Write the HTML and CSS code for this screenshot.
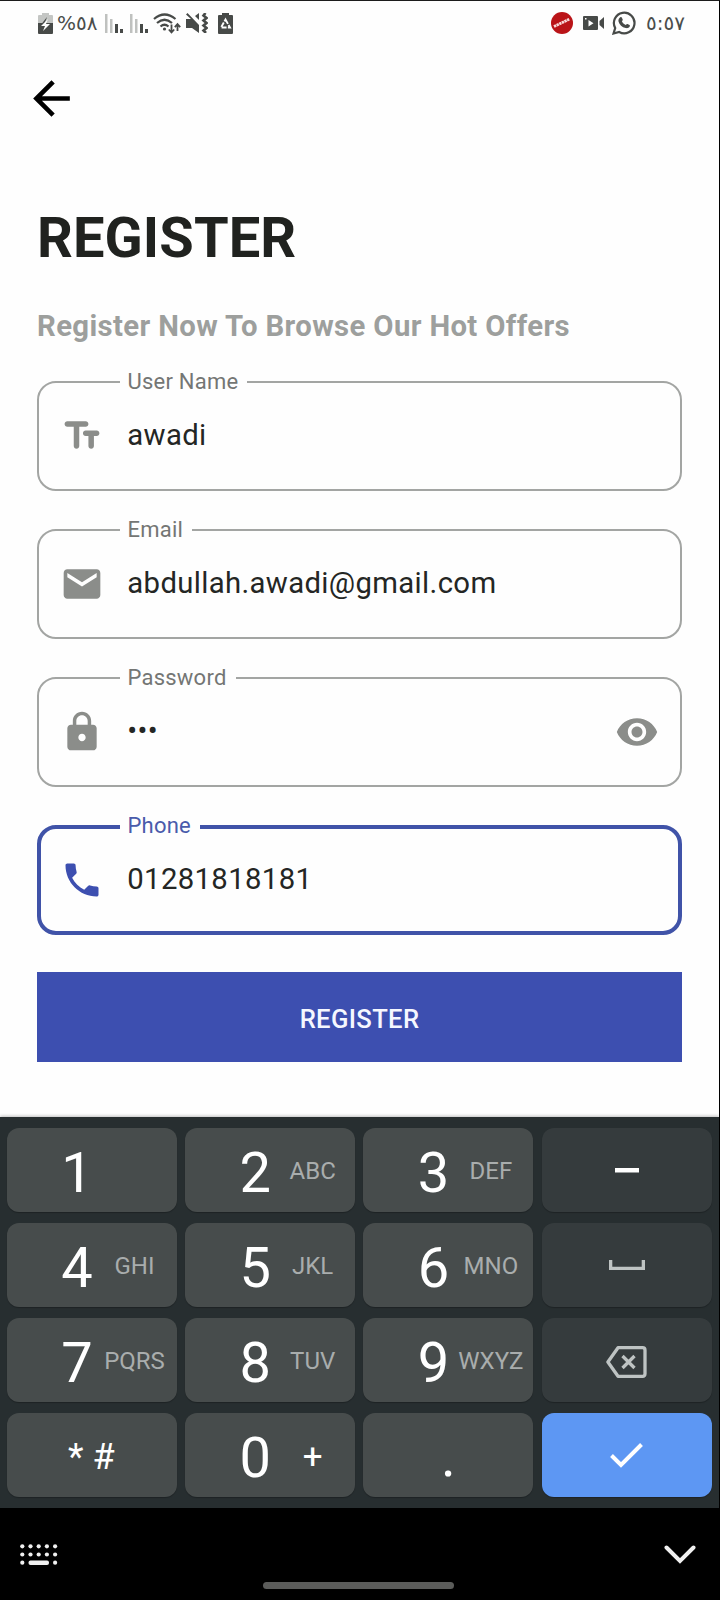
FILE: index.html
```html
<!DOCTYPE html>
<html lang="en">
<head>
<meta charset="utf-8">
<title>Register</title>
<link rel="stylesheet" href="styles.css">
</head>
<body>
<div class="screen">
  <header class="status">
    <div class="status-left">
      <svg class="battery" width="15" height="21" viewBox="0 0 15 21"><path fill="#c4c6c4" d="M4 0h7v2h3q1 0 1 1v8H0V3q0-1 1-1h3z"/><path fill="#474a48" d="M0 10h15v10q0 1-1 1H1q-1 0-1-1z"/><path fill="#474a48" d="M9 4 3.500 11h3z"/><path fill="#fff" d="M10 6 3 13h4l-2 5 7-7H8z"/></svg>
      <span class="percent">%٥٨</span>
      <svg class="signal" width="18" height="20" viewBox="0 0 18 20"><path fill="#bfc1bf" d="M0 1h2.500v19H0zM5 6h2.500v14H5z"/><path fill="#474a48" d="M10 11h3v9h-3zM15 16h3v4h-3z"/></svg>
      <svg class="signal two" width="18" height="20" viewBox="0 0 18 20"><path fill="#bfc1bf" d="M0 1h2.500v19H0zM5 6h2.500v14H5z"/><path fill="#474a48" d="M10 11h3v9h-3zM15 16h3v4h-3z"/></svg>
      <svg class="wifi" width="28" height="21" viewBox="0 0 28 21" fill="none" stroke="#474a48"><path stroke-width="2.200" d="M1 6q10.500-9 21.500 0M4 10q7.500-6.500 15 0M7.500 13.500q4-3.500 8 0"/><circle cx="11.500" cy="16" r="1.600" fill="#474a48" stroke="none"/><path stroke-width="1.800" d="M18.500 11.500v7M15.800 16.500l2.700 3 2.700-3M24.500 18v-6M21.800 14.200l2.700-3 2.700 3"/></svg>
      <svg class="mute" width="22" height="20" viewBox="0 0 22 20"><path fill="#474a48" d="M0 6h5L0 1.500 1.500 0 13 12v8l-7-5H0zM9 3l4-3v7z"/><path fill="none" stroke="#474a48" stroke-width="2.600" d="M19.500 0l-2 2.500 3 2.500-3 2.500 3 2.500-3 2.500 3 2.500-3 2.500 2.500 2.500"/></svg>
      <svg class="saver" width="15" height="21" viewBox="0 0 15 21"><path fill="#474a48" d="M4 0h7v2h3q1 0 1 1v17q0 1-1 1H1q-1 0-1-1V3q0-1 1-1h3z"/><path fill="none" stroke="#fff" stroke-width="1.900" stroke-dasharray="5 1.300" d="M7.500 6.500 12 14.500H3z"/></svg>
    </div>
    <div class="status-right">
      <svg width="22" height="22" viewBox="0 0 22 22"><circle cx="11" cy="11" r="11" fill="#ba1418"/><path fill="none" stroke="#f6dada" stroke-width="2.800" stroke-dasharray="2.400 .5" d="M3 14.500 18.500 7"/></svg>
      <svg class="video" width="21" height="14" viewBox="0 0 21 14"><path fill="#474a48" d="M1 0h13q1 0 1 1v12q0 1-1 1H1q-1 0-1-1V1q0-1 1-1zM16.500 5 21 1v12l-4.500-4z"/><path fill="#fff" d="M5.500 4v6.500l5-3.200zM2 2h1.500v1.500H2z"/></svg>
      <svg class="whatsapp" width="24" height="24" viewBox="0 0 24 24"><path fill="none" stroke="#474a48" stroke-width="2.200" d="M1.500 22.500 3.200 17A10.300 10.300 0 1 1 7.200 21z"/><path fill="#474a48" d="M8.300 6.200c.6-.4 1.200-.2 1.500.3l.9 2c.2.500-.1 1-.8 1.700.8 1.700 2 2.900 3.900 3.800.8-1 1.200-1.300 1.700-1l2 1c.5.300.5.900.2 1.500-.7 1.500-2.400 2-4 1.600-3.700-1-6.300-3.600-7.200-6.700-.4-1.700.5-3.400 1.800-4.200z"/></svg>
      <span class="clock">٥:٥٧</span>
    </div>
  </header>

  <main class="content">
    <svg class="back" width="55" height="55" viewBox="0 0 24 24"><path d="M20 11H7.830l5.590-5.590L12 4l-8 8 8 8 1.410-1.410L7.830 13H20z"/></svg>
    <h1 class="title"><span>REGISTER</span></h1>
    <p class="subtitle">Register Now To Browse Our Hot Offers</p>

    <div class="fields">
      <div class="field">
        <label class="label">User Name</label>
        <svg class="icon" viewBox="0 0 24 24"><path d="M2.500 5.500C2.500 6.330 3.170 7 4 7h3.500v10.500c0 .83.67 1.500 1.500 1.500s1.500-.67 1.500-1.500V7H14c.83 0 1.500-.67 1.500-1.500S14.830 4 14 4H4c-.83 0-1.500.67-1.500 1.500zM20 9h-6c-.83 0-1.500.67-1.500 1.500S13.170 12 14 12h1.500v5.500c0 .83.67 1.500 1.500 1.500s1.500-.67 1.500-1.500V12H20c.83 0 1.500-.67 1.500-1.500S20.830 9 20 9z"/></svg>
        <span class="value">awadi</span>
      </div>
      <div class="field">
        <label class="label">Email</label>
        <svg class="icon" viewBox="0 0 24 24"><path d="M20 4H4c-1.100 0-1.990.9-1.990 2L2 18c0 1.100.9 2 2 2h16c1.100 0 2-.9 2-2V6c0-1.100-.9-2-2-2zm0 4.300l-8 5-8-5V6l8 5 8-5v2.300z"/></svg>
        <span class="value">abdullah.awadi@gmail.com</span>
      </div>
      <div class="field">
        <label class="label">Password</label>
        <svg class="icon" viewBox="0 0 24 24"><path d="M18 8h-1V6c0-2.760-2.240-5-5-5S7 3.240 7 6v2H6c-1.100 0-2 .9-2 2v10c0 1.100.9 2 2 2h12c1.100 0 2-.9 2-2V10c0-1.100-.9-2-2-2zm-6 9c-1.100 0-2-.9-2-2s.9-2 2-2 2 .9 2 2-.9 2-2 2zm3.100-9H8.900V6c0-1.710 1.390-3.100 3.100-3.100 1.710 0 3.100 1.390 3.100 3.100v2z"/></svg>
        <span class="value">•••</span>
        <svg class="icon eye" viewBox="0 0 24 24"><path d="M12 4.500C7 4.500 2.730 7.610 1 12c1.730 4.390 6 7.500 11 7.500s9.270-3.110 11-7.500c-1.730-4.390-6-7.500-11-7.500zM12 17c-2.760 0-5-2.240-5-5s2.240-5 5-5 5 2.240 5 5-2.240 5-5 5zm0-8c-1.660 0-3 1.340-3 3s1.340 3 3 3 3-1.340 3-3-1.340-3-3-3z"/></svg>
      </div>
      <div class="field focused">
        <label class="label">Phone</label>
        <svg class="icon" viewBox="0 0 24 24"><path d="M6.620 10.790c1.440 2.830 3.760 5.140 6.590 6.590l2.200-2.200c.27-.27.67-.36 1.020-.24 1.120.37 2.330.57 3.570.57.55 0 1 .45 1 1V20c0 .55-.45 1-1 1-9.390 0-17-7.610-17-17 0-.55.45-1 1-1h3.500c.55 0 1 .45 1 1 0 1.250.2 2.450.57 3.570.11.35.03.74-.25 1.020l-2.200 2.200z"/></svg>
        <span class="value">01281818181</span>
      </div>
    </div>
    <button class="submit">REGISTER</button>
  </main>

  <section class="keyboard">
    <div class="key"><b>1</b></div>
    <div class="key"><b>2</b><i>ABC</i></div>
    <div class="key"><b>3</b><i>DEF</i></div>
    <div class="key fn"><svg width="24" height="6" viewBox="0 0 24 6"><path fill="#fff" d="M0 1h24v4.500H0z"/></svg></div>
    <div class="key"><b>4</b><i>GHI</i></div>
    <div class="key"><b>5</b><i>JKL</i></div>
    <div class="key"><b>6</b><i>MNO</i></div>
    <div class="key fn"><svg width="36" height="10" viewBox="0 0 36 10"><path fill="none" stroke="#bec3c3" stroke-width="3.300" d="M1.650 0v8.300h32.700V0"/></svg></div>
    <div class="key"><b>7</b><i>PQRS</i></div>
    <div class="key"><b>8</b><i>TUV</i></div>
    <div class="key"><b>9</b><i>WXYZ</i></div>
    <div class="key fn del"><svg width="41" height="32" viewBox="0 0 41 32" fill="none" stroke="#bec3c3" stroke-width="3.300"><path stroke-linejoin="round" d="M12 1.700h24.500q2.500 0 2.500 2.500v23.600q0 2.500-2.500 2.500H12L1.900 16z"/><path d="M16.500 10 28.500 22M28.500 10 16.500 22"/></svg></div>
    <div class="key sym"><span>*</span><span>#</span></div>
    <div class="key"><b>0</b><i class="plus">+</i></div>
    <div class="key fn dot"><span class="period">.</span></div>
    <div class="key fn ok"><svg width="33" height="26" viewBox="0 0 33 26"><path fill="none" stroke="#fff" stroke-width="4" d="M1.500 13.500 11 23 31.500 2.500"/></svg></div>
  </section>

  <nav class="navbar">
    <svg class="kb-icon" width="38" height="22" viewBox="0 0 38 22" fill="#f0f0f0"><g><circle cx="2.300" cy="2.300" r="2.100"/><circle cx="10.500" cy="2.300" r="2.100"/><circle cx="18.700" cy="2.300" r="2.100"/><circle cx="26.900" cy="2.300" r="2.100"/><circle cx="35.100" cy="2.300" r="2.100"/><circle cx="2.300" cy="10.500" r="2.100"/><circle cx="10.500" cy="10.500" r="2.100"/><circle cx="18.700" cy="10.500" r="2.100"/><circle cx="26.900" cy="10.500" r="2.100"/><circle cx="35.100" cy="10.500" r="2.100"/><circle cx="2.300" cy="18.700" r="2.100"/><circle cx="35.100" cy="18.700" r="2.100"/></g><rect x="8.500" y="16.500" width="20.500" height="4.500" rx="2"/></svg>
    <div class="handle"></div>
    <svg class="chevron" width="32" height="19" viewBox="0 0 32 19"><path fill="none" stroke="#f0f0f0" stroke-width="4" stroke-linecap="round" d="M2.500 2.500 16 16 29.500 2.500"/></svg>
  </nav>
</div>
</body>
</html>
```

FILE: styles.css
```css
* { box-sizing: border-box; }
body {
  margin: 0;
  background: #000;
  font-family: Roboto, "Liberation Sans", sans-serif;
}
.screen {
  width: 720px;
  height: 1600px;
  overflow: hidden;
  display: flex;
  flex-direction: column;
  background: #fefefe;
  border-top: 1px solid #1c1c1c;
  border-right: 1px solid #000;
}
.status {
  height: 44px;
  padding: 0 37px 0 38px;
  display: flex;
  justify-content: space-between;
  align-items: center;
  color: #4a4d4b;
}
.status-left, .status-right { display: flex; align-items: center; }
.percent, .clock {
  font-family: "DejaVu Sans", sans-serif;
  font-size: 20px;
  line-height: 24px;
  direction: ltr;
  unicode-bidi: bidi-override;
}
.percent { width: 40px; margin: 0 8px 0 4px; letter-spacing: -2px; white-space: nowrap; }
.two { margin-left: 7px; }
.wifi { margin-left: 5px; }
.mute { margin-left: 5px; }
.saver { margin-left: 10px; }
.video { margin-left: 10px; }
.whatsapp { margin-left: 8px; }
.clock { width: 36px; margin-left: 10px; letter-spacing: -1.500px; white-space: nowrap; }

.content {
  height: 1072px;
  padding: 0 37px;
  display: flex;
  flex-direction: column;
}
.back { margin: 26px 0 0 -13px; flex: none; }
.title {
  margin: 79px 0 0;
  font-size: 56px;
  line-height: 66px;
  font-weight: 700;
  letter-spacing: .1px;
  color: #20221f;
}
.subtitle {
  margin: 37px 0 0;
  font-size: 29.300px;
  line-height: 36px;
  font-weight: 700;
  letter-spacing: .370px;
  color: #9d9f9d;
  white-space: nowrap;
}
.fields {
  margin-top: 37px;
  display: flex;
  flex-direction: column;
  gap: 37.700px;
}
.field {
  position: relative;
  height: 110.300px;
  border: 2px solid #a3a5a3;
  border-radius: 19px;
  padding: 0 21px;
  display: flex;
  align-items: center;
}
.label {
  position: absolute;
  left: 81px;
  top: -15px;
  padding: 0 9px 0 7.500px;
  font-size: 22px;
  line-height: 27px;
  letter-spacing: .230px;
  color: #747674;
  background: #fefefe;
}
.icon { width: 44px; height: 44px; fill: #8b8d8a; flex: none; }
.value {
  margin-left: 23.300px;
  font-size: 29.300px;
  line-height: 36px;
  letter-spacing: .350px;
  color: #242624;
  position: relative;
  top: -1px;
}
.eye { margin-left: auto; }
.focused { border: 4px solid #4053a8; padding: 0 19px; }
.focused .label { left: 79px; top: -17px; color: #4a5bab; }
.focused .icon { fill: #3d4fb0; }
.submit {
  margin: 37px 0 0;
  padding: 3px 0 0;
  height: 90px;
  flex: none;
  border: 0;
  background: #3d4fb0;
  color: #f5f7ff;
  font: 500 25.600px/30px Roboto, sans-serif;
  letter-spacing: .350px;
}

.keyboard {
  height: 391px;
  padding: 11px 7px 10px;
  display: grid;
  grid-template-columns: repeat(4, 170px);
  grid-template-rows: repeat(4, 84px);
  gap: 11px 8.200px;
  background: #272e30;
  box-shadow: 0 -1px 3px rgba(0, 0, 0, .25);
}
.key {
  display: grid;
  grid-template-columns: 28px 75px;
  column-gap: 6px;
  padding-left: 56px;
  align-items: center;
  justify-items: center;
  background: #474c4c;
  border-radius: 12px;
  box-shadow: 0 1px 1px rgba(0, 0, 0, .25);
  color: #fff;
}
.key b { font-size: 56px; line-height: 60px; font-weight: 400; margin-top: 5px; }
.key i { font-size: 24px; line-height: 28px; font-style: normal; color: #a9adad; margin-top: 1px; }
.fn { display: flex; justify-content: center; padding: 0; background: #353b3d; }
.key i.plus { font-size: 35px; color: #fff; margin-top: 4px; }
.sym { display: flex; padding-left: 61px; gap: 9px; font-size: 36px; padding-top: 3px; }
.dot { background: #474c4c; }
.period { font-size: 56px; line-height: 60px; margin-top: 4px; }
.del { padding-top: 3px; }
.ok { background: #5d97f3; }

.navbar {
  flex: 1;
  background: #000;
  padding: 36px 23px 0 20px;
  display: flex;
  justify-content: space-between;
  align-items: flex-start;
}
.handle { width: 191px; height: 7px; margin: 38px 5px 0 0; border-radius: 4px; background: #5b5c5a; }
.chevron { margin-top: 1px; }
```
